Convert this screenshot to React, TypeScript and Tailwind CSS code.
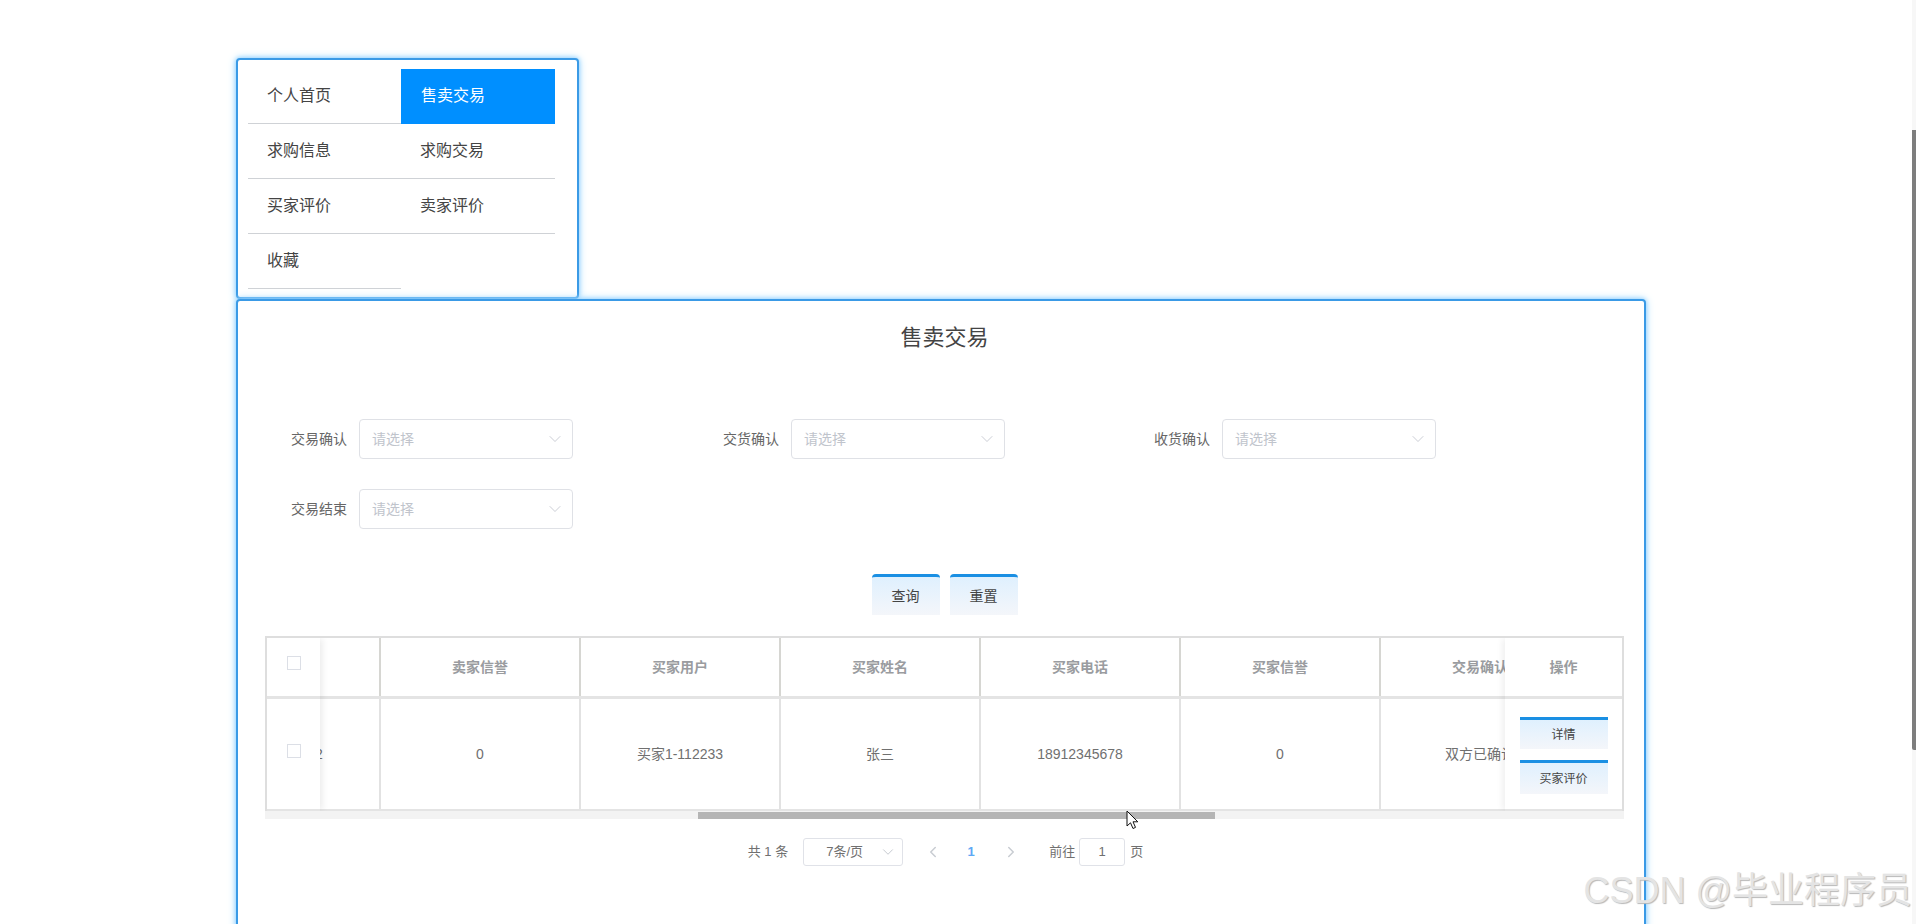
import { ChevronDown, ChevronLeft, ChevronRight } from 'lucide-react';

const menuItems = [
  { label: '个人首页' },
  { label: '售卖交易', active: true },
  { label: '求购信息' },
  { label: '求购交易' },
  { label: '买家评价' },
  { label: '卖家评价' },
  { label: '收藏' },
];

const filters = ['交易确认', '交货确认', '收货确认', '交易结束'];

const columns = [
  { label: '卖家电话', value: '18912345672' },
  { label: '卖家信誉', value: '0' },
  { label: '买家用户', value: '买家1-112233' },
  { label: '买家姓名', value: '张三' },
  { label: '买家电话', value: '18912345678' },
  { label: '买家信誉', value: '0' },
  { label: '交易确认', value: '双方已确认' },
];

function FilterSelect({ label }: { label: string }) {
  return (
    <div className="flex items-center">
      <label className="w-[92px] pr-[12px] text-right text-[14px] text-[#666]">{label}</label>
      <div className="flex h-[40px] w-[214px] items-center justify-between rounded-[4px] border border-[#dfe1e6] bg-white pl-[12px] pr-[7px]">
        <span className="text-[14px] text-[#c0c4cc]">请选择</span>
        <ChevronDown size={20} strokeWidth={1} className="text-[#c0c4cc]" />
      </div>
    </div>
  );
}

function ActionButton({ label, className }: { label: string; className: string }) {
  return (
    <button
      className={`border-t-[3px] border-[#1a8fe3] bg-gradient-to-b from-[#dff0fe] to-[#f4f6fa] text-[#444] ${className}`}
    >
      {label}
    </button>
  );
}

export default function App() {
  return (
    <div className="relative flex h-[924px] overflow-hidden bg-white font-['Liberation_Sans','Noto_Sans_CJK_SC',sans-serif]">
      <main className="flex min-w-0 flex-1 flex-col items-start overflow-hidden pl-[236px] pt-[58px]">
        {/* Top menu */}
        <nav className="h-[241px] w-[343px] shrink-0 rounded-[4px] border-2 border-[#3a9ae6] bg-white pl-[10px] pt-[9px] shadow-[0_0_4px_#8fd0ff,0_0_9px_#a8dcff]">
          <ul className="grid grid-cols-[153px_154px]">
            {menuItems.map((item) => (
              <li
                key={item.label}
                className={
                  item.active
                    ? 'h-[55px] bg-[#008fff] pl-[20px] text-[16px] leading-[54px] text-white'
                    : 'h-[55px] border-b border-[#cfd2d6] pl-[19px] text-[16px] leading-[54px] text-[#444]'
                }
              >
                {item.label}
              </li>
            ))}
          </ul>
        </nav>

        {/* Trade panel */}
        <section className="h-[640px] w-[1410px] shrink-0 rounded-[4px] border-2 border-[#3a9ae6] bg-white pl-[27px] pr-[20px] pt-[21px] shadow-[0_0_4px_#8fd0ff,0_0_9px_#a8dcff]">
          <h2 className="text-center text-[22px] leading-[32px] text-[#444]">售卖交易</h2>

          <form className="ml-[2px] mt-[65px] grid grid-cols-[432px_431px_432px] gap-y-[30px]">
            {filters.map((label) => (
              <FilterSelect key={label} label={label} />
            ))}
          </form>

          <div className="mt-[45px] flex justify-center gap-[10px]">
            <ActionButton label="查询" className="h-[41px] w-[68px] rounded-t-[4px] text-[14px]" />
            <ActionButton label="重置" className="h-[41px] w-[68px] rounded-t-[4px] text-[14px]" />
          </div>

          {/* Table, scrolled sideways with fixed columns on both sides */}
          <div className="relative mt-[21px] overflow-hidden border-x-2 border-t-2 border-[#dedede]">
            <div className="-ml-[86px] w-max">
              <div className="flex h-[61px] border-b-[3px] border-[#e4e4e4]">
                {columns.map((col) => (
                  <div
                    key={col.label}
                    className="flex w-[200px] items-center justify-center border-r-2 border-[#d6d6d2] text-[14px] font-semibold text-[#9a9ca0]"
                  >
                    {col.label}
                  </div>
                ))}
              </div>
              <div className="flex h-[112px] border-b-2 border-[#e4e4e4]">
                {columns.map((col) => (
                  <div
                    key={col.label}
                    className="flex w-[200px] items-center justify-center border-r-2 border-[#e2e2e2] text-[14px] text-[#707070]"
                  >
                    {col.value}
                  </div>
                ))}
              </div>
            </div>

            <div className="absolute bottom-0 left-0 top-0 w-[53px] bg-white shadow-[4px_0_6px_-1px_rgba(0,0,0,0.07)]">
              <div className="flex h-[61px] items-start border-b-[3px] border-[#e4e4e4] pl-[20px] pt-[18px]">
                <span className="block h-[14px] w-[14px] border border-[#dcdfe6]" />
              </div>
              <div className="flex h-[112px] items-start border-b-2 border-[#e4e4e4] pl-[20px] pt-[45px]">
                <span className="block h-[14px] w-[14px] border border-[#dcdfe6]" />
              </div>
            </div>

            <div className="absolute bottom-0 right-0 top-0 w-[117px] bg-white shadow-[-4px_0_6px_-1px_rgba(0,0,0,0.06)]">
              <div className="flex h-[61px] items-center justify-center border-b-[3px] border-[#e4e4e4] text-[14px] font-semibold text-[#9a9ca0]">
                操作
              </div>
              <div className="flex h-[112px] flex-col items-center gap-[11px] border-b-2 border-[#e4e4e4] pt-[18px]">
                <ActionButton label="详情" className="h-[32px] w-[88px] text-[12px]" />
                <ActionButton label="买家评价" className="h-[34px] w-[88px] text-[12px]" />
              </div>
            </div>
          </div>
          <div className="h-[8px] w-[1359px] bg-[#f3f3f3] pt-px">
            <div className="ml-[433px] h-[7px] w-[517px] bg-[#b5b5b5]" />
          </div>

          {/* Pagination */}
          <div className="mt-[19px] flex h-[28px] items-center justify-center pl-[2px] text-[13px] text-[#707070]">
            <span>共 1 条</span>
            <div className="ml-[15px] flex h-[28px] w-[100px] items-center rounded-[3px] border border-[#e0e2e8] pl-[22px] pr-[5px]">
              <span className="flex-1">7条/页</span>
              <ChevronDown size={18} strokeWidth={1.2} className="text-[#c0c4cc]" />
            </div>
            <button className="ml-[15px] flex w-[30px] justify-center text-[#c8ccd2]">
              <ChevronLeft size={18} strokeWidth={2} />
            </button>
            <span className="ml-[8px] mr-[10px] w-[30px] text-center font-bold text-[#5ea8f5]">1</span>
            <button className="flex w-[30px] justify-center text-[#c8ccd2]">
              <ChevronRight size={18} strokeWidth={2} />
            </button>
            <span className="ml-[23px]">前往</span>
            <div className="ml-[4px] flex h-[28px] w-[46px] items-center justify-center rounded-[3px] border border-[#e0e2e8]">
              1
            </div>
            <span className="ml-[5px]">页</span>
          </div>
        </section>
      </main>

      {/* Page scrollbar */}
      <div className="w-[4px] shrink-0 bg-[#f7f7f7] pt-[130px]">
        <div className="h-[620px] rounded-bl-[2px] bg-[#7e7e7e]" />
      </div>

      {/* Mouse cursor */}
      <svg
        className="absolute left-[1126px] top-[810px]"
        width="13"
        height="20"
        viewBox="0 0 13 20"
      >
        <path d="M1 1 L1 16 L4.5 12.8 L7 18.5 L9.5 17.4 L7 11.8 L11.8 11.8 Z" fill="#fff" stroke="#111" strokeWidth="1" />
      </svg>

      {/* Watermark */}
      <div className="absolute right-[4px] top-[866px] whitespace-nowrap text-[36px] leading-[50px] text-[#e4e4e4] [text-shadow:1px_1px_1px_#b8b8b8]">
        CSDN @毕业程序员
      </div>
    </div>
  );
}
